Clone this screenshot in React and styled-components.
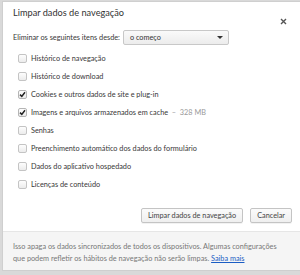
import React from "react";
import styled, { createGlobalStyle } from "styled-components";

const Global = createGlobalStyle`
  html, body { margin: 0; padding: 0; background: #d9d9d9; }
  body { width: 300px; height: 275px; overflow: hidden; font-family: Lato, "Open Sans", sans-serif; }
`;

const items = [
  { label: "Histórico de navegação" },
  { label: "Histórico de download" },
  { label: "Cookies e outros dados de site e plug-in", checked: true },
  { label: "Imagens e arquivos armazenados em cache", checked: true, extra: "328 MB" },
  { label: "Senhas" },
  { label: "Preenchimento automático dos dados do formulário" },
  { label: "Dados do aplicativo hospedado" },
  { label: "Licenças de conteúdo" },
];

const App = () => {
  return (
    <>
      <Global />
      <Dialog>
        <Header>
          <Title>Limpar dados de navegação</Title>
          <Close>
            <svg width="7" height="7" viewBox="0 0 7 7">
              <path d="M1 1L6 6M6 1L1 6" stroke="#555" strokeWidth="1.4" />
            </svg>
          </Close>
        </Header>
        <Body>
          <SinceRow>
            <Label>Eliminar os seguintes itens desde:</Label>
            <Select>
              <span>o começo</span>
              <Arrow />
            </Select>
          </SinceRow>
          <List>
            {items.map((it) => (
              <Row key={it.label}>
                <Box checked={it.checked}>
                  {it.checked && (
                    <svg width="7" height="7" viewBox="0 0 7 7">
                      <path d="M1 3.6L2.8 5.4L6 1.2" stroke="#222" strokeWidth="1.5" fill="none" />
                    </svg>
                  )}
                </Box>
                <Label>
                  {it.label}
                  {it.extra && <Muted>&nbsp; – &nbsp;{it.extra}</Muted>}
                </Label>
              </Row>
            ))}
          </List>
          <Buttons>
            <Button>Limpar dados de navegação</Button>
            <Button>Cancelar</Button>
          </Buttons>
        </Body>
        <Footer>
          <FooterLine>
            Isso apaga os dados sincronizados de todos os dispositivos. Algumas configurações
          </FooterLine>
          <FooterLine>
            que podem refletir os hábitos de navegação não serão limpas. <Link>Saiba mais</Link>
          </FooterLine>
        </Footer>
      </Dialog>
    </>
  );
};

const Dialog = styled.div`
  margin: 1px 0 0 2px;
  width: 300px;
  height: 270px;
  background: #fff;
  border: 1px solid #cfcfcf;
  box-sizing: border-box;
  display: flex;
  flex-direction: column;
`;

const Header = styled.div`
  display: flex;
  justify-content: space-between;
  align-items: flex-start;
  padding: 5px 14px 0 10px;
  height: 21px;
`;

const Title = styled.div`
  font-size: 9.2px;
  color: #333;
`;

const Close = styled.div`
  padding-top: 2px;
`;

const Body = styled.div`
  flex: 1;
  padding: 0 9px 0 10px;
`;

const SinceRow = styled.div`
  display: flex;
  align-items: center;
  gap: 3px;
  height: 15px;
  margin-top: 2px;
`;

const Label = styled.span`
  font-size: 7.3px;
  color: #383838;
  white-space: nowrap;
`;

const Muted = styled.span`
  color: #999;
`;

const Select = styled.div`
  width: 106px;
  height: 15px;
  box-sizing: border-box;
  border: 1px solid #c8c8c8;
  border-radius: 2px;
  background: linear-gradient(#fafafa, #ececec);
  display: flex;
  align-items: center;
  justify-content: space-between;
  padding: 0 5px 0 6px;
  font-size: 7.3px;
  color: #333;
`;

const Arrow = styled.span`
  width: 0;
  height: 0;
  border-left: 3px solid transparent;
  border-right: 3px solid transparent;
  border-top: 3px solid #333;
`;

const List = styled.div`
  display: flex;
  flex-direction: column;
  margin-top: 4px;
  padding-left: 5px;
`;

const Row = styled.div`
  display: flex;
  align-items: center;
  gap: 4px;
  height: 18px;
`;

const Box = styled.span`
  width: 9px;
  height: 9px;
  box-sizing: border-box;
  border: 1px solid ${(p) => (p.checked ? "#b5b5b5" : "#c4c4c4")};
  border-radius: 2px;
  background: linear-gradient(#fdfdfd, #ececec);
  display: flex;
  align-items: center;
  justify-content: center;
`;

const Buttons = styled.div`
  display: flex;
  justify-content: flex-end;
  gap: 7px;
  margin-top: 15px;
`;

const Button = styled.button`
  height: 15px;
  padding: 0 6px;
  font-family: inherit;
  font-size: 7.3px;
  color: #444;
  border: 1px solid #c4c4c4;
  border-radius: 2px;
  background: linear-gradient(#fbfbfb, #efefef);
  box-shadow: 0 1px 0 rgba(0, 0, 0, 0.05);
`;

const Footer = styled.div`
  background: #f5f5f5;
  border-top: 1px solid #e6e6e6;
  padding: 10px 8px 0 10px;
  height: 39px;
  box-sizing: border-box;
  display: flex;
  flex-direction: column;
  gap: 2px;
`;

const FooterLine = styled.div`
  font-size: 7.3px;
  line-height: 10px;
  color: #777;
  white-space: nowrap;
`;

const Link = styled.a`
  color: #1a5dc4;
  text-decoration: underline;
`;

export default App;
